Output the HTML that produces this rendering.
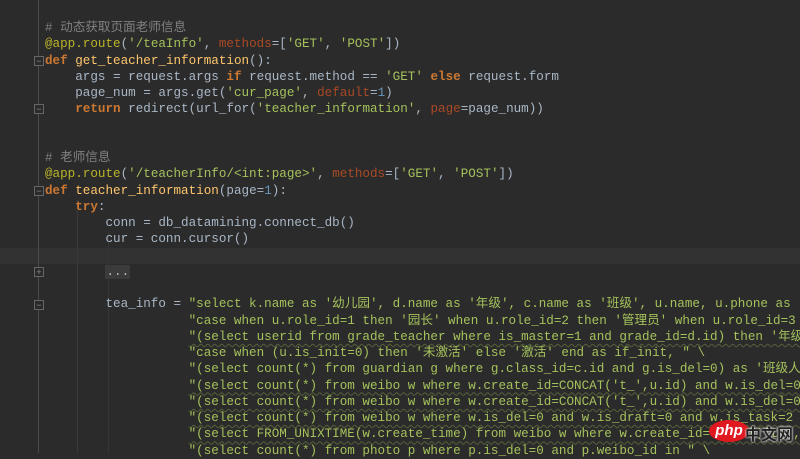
<!DOCTYPE html>
<html><head><meta charset="utf-8"><style>
html,body{margin:0;padding:0;}
body{width:800px;height:453px;overflow:hidden;background:#2b2b2b;position:relative;font-family:"Liberation Mono","Noto Sans CJK SC",monospace;font-size:12.6px;color:#a9b7c6;}
#code{position:absolute;left:45px;top:3.9px;width:755px;overflow:hidden;}
.l{height:16.25px;line-height:16.25px;white-space:pre;}
.k{color:#cc7832;font-weight:bold}
.s{color:#a5c25c}
.c{color:#808080}
.d{color:#bbb529}
.n{color:#6897bb}
.p{color:#aa4926}
.f{color:#ffc66d}
.w{text-decoration:underline wavy #55603a 1px;text-underline-offset:3px}
#hl{position:absolute;left:0;top:247.6px;width:800px;height:16.25px;background:#323232;}
#gut{position:absolute;left:38px;top:0;width:1px;height:453px;background:#4a4a4a;}
.g1{position:absolute;left:77px;width:1px;background:#3a3a3a;}
.fold{position:absolute;left:34px;width:8px;height:8px;border:1px solid #666;background:#2b2b2b;color:#888;font-size:9px;line-height:8px;text-align:center;font-family:"Liberation Sans",sans-serif;}
.dots{background:#3b3b3b;color:#a9b7c6;padding:0 1px;}
#wm{position:absolute;left:709px;top:420px;width:40px;height:22px;border-radius:50%;background:#e0181f;color:#fff;font:italic bold 15px "Liberation Sans",sans-serif;text-align:center;line-height:21px;}
#wm2{position:absolute;left:745px;top:421px;color:#222;font:bold 16px "Noto Sans CJK SC",sans-serif;text-shadow:0 0 2px #eee,0 0 2px #eee;}
</style></head><body>
<div id="hl"></div>
<div id="gut"></div>
<div class="g1" style="top:200px;height:253px"></div>
<div class="g1" style="left:108px;top:232px;height:221px;background:#363636"></div>
<div class="fold" style="top:56px">−</div>
<div class="fold" style="top:104px">−</div>
<div class="fold" style="top:186px">−</div>
<div class="fold" style="top:267px">+</div>
<div class="fold" style="top:300px">−</div>
<div id="code">
<div class="l"> </div>
<div class="l c"># 动态获取页面老师信息</div>
<div class="l"><span class="d">@app.route</span>(<span class="s">'/teaInfo'</span>, <span class="p">methods</span>=[<span class="s">'GET'</span>, <span class="s">'POST'</span>])</div>
<div class="l"><span class="k">def</span> <span class="f">get_teacher_information</span>():</div>
<div class="l">    args = request.args <span class="k">if</span> request.method == <span class="s">'GET'</span> <span class="k">else</span> request.form</div>
<div class="l">    page_num = args.get(<span class="s">'cur_page'</span>, <span class="p">default</span>=<span class="n">1</span>)</div>
<div class="l">    <span class="k">return</span> redirect(url_for(<span class="s">'teacher_information'</span>, <span class="p">page</span>=page_num))</div>
<div class="l"> </div>
<div class="l"> </div>
<div class="l c"># 老师信息</div>
<div class="l"><span class="d">@app.route</span>(<span class="s">'/teacherInfo/&lt;int:page&gt;'</span>, <span class="p">methods</span>=[<span class="s">'GET'</span>, <span class="s">'POST'</span>])</div>
<div class="l"><span class="k">def</span> <span class="f">teacher_information</span>(page=<span class="n">1</span>):</div>
<div class="l">    <span class="k">try</span>:</div>
<div class="l">        conn = db_datamining.connect_db()</div>
<div class="l">        cur = conn.cursor()</div>
<div class="l"> </div>
<div class="l">        <span class="dots">...</span></div>
<div class="l"> </div>
<div class="l">        tea_info = <span class="s">"select k.name as '幼儿园', d.name as '年级', c.name as '班级', u.name, u.phone as "</span></div>
<div class="l s">                   "case when u.role_id=1 then '园长' when u.role_id=2 then '管理员' when u.role_id=3 </div>
<div class="l s">                   <span class="w">"(select userid from grade_teacher where is_master=1 and grade_id=d.id) then '年级</span></div>
<div class="l s">                   "case when (u.is_init=0) then '未激活' else '激活' end as if_init, " \</div>
<div class="l s">                   "(select count(*) from guardian g where g.class_id=c.id and g.is_del=0) as '班级人</div>
<div class="l s">                   <span class="w">"(select count(*) from weibo w where w.create_id=CONCAT('t_',u.id) and w.is_del=0</span></div>
<div class="l s">                   <span class="w">"(select count(*) from weibo w where w.create_id=CONCAT('t_',u.id) and w.is_del=0</span></div>
<div class="l s">                   <span class="w">"(select count(*) from weibo w where w.is_del=0 and w.is_draft=0 and w.is_task=2 </span></div>
<div class="l s">                   <span class="w">"(select FROM_UNIXTIME(w.create_time) from weibo w where w.create_id=CONCAT('t_',</span></div>
<div class="l s">                   "(select count(*) from photo p where p.is_del=0 and p.weibo_id in " \</div>
</div>
<div id="wm">php</div>
<div id="wm2">中文网</div>
</body></html>
